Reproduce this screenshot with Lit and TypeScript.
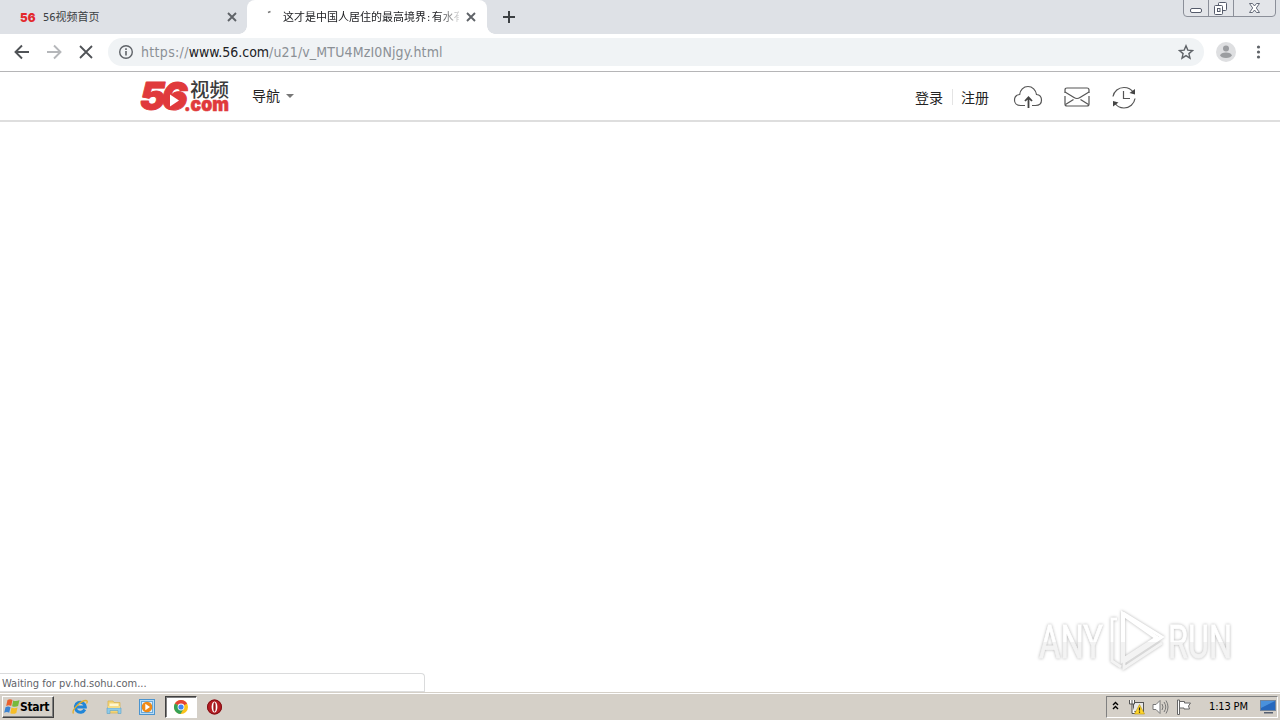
import {LitElement, html, svg, css} from 'lit';
import {customElement, property} from 'lit/decorators.js';

const cross = html`
  <svg class="cross" width="10" height="10" viewBox="0 0 10 10">
    <path d="M1 1l8 8M9 1L1 9" fill="none" stroke="#5f6368" stroke-width="1.9" />
  </svg>`;

/** Tab row with the window buttons on its right */
@customElement('browser-tabs')
export class BrowserTabs extends LitElement {
  static styles = css`
    :host {
      display: flex;
      height: 34px;
      background: #dee1e6;
      font: 11px/16px 'DejaVu Sans Condensed', 'Noto Sans CJK SC', sans-serif;
      color: #3c4043;
    }
    svg { display: block; flex: none; }
    .tab {
      display: flex;
      align-items: center;
      box-sizing: border-box;
      height: 34px;
    }
    .idle { width: 247px; padding: 0 10px 0 20px; }
    .active {
      position: relative;
      width: 240px;
      padding: 0 11px 0 18px;
      background: #fff;
      border-radius: 8px 8px 0 0;
    }
    .active::before, .active::after {
      content: '';
      position: absolute;
      bottom: 0;
      width: 8px;
      height: 8px;
    }
    .active::before { left: -8px; background: radial-gradient(circle at 0 0, transparent 7.5px, #fff 8px); }
    .active::after { right: -8px; background: radial-gradient(circle at 100% 0, transparent 7.5px, #fff 8px); }
    .title { flex: 1; padding-top: 2px; white-space: nowrap; overflow: hidden; }
    .idle .title { margin-left: 7px; }
    .active .title {
      flex: none;
      width: 176px;
      margin: 0 7px 0 9px;
      color: #202124;
      -webkit-mask-image: linear-gradient(90deg, #000 154px, transparent 180px);
    }
    .colon { margin: 0 1.500px 0 1px; }
    .plus { margin: 11px 0 0 16px; }
    .window { margin-left: auto; margin-right: 4px; }
  `;

  render() {
    return html`
      <div class="tab idle">
        <svg width="16" height="14" viewBox="0 0 16 14">
          <text x="0" y="11.500" font-family="Inter, sans-serif" font-weight="900" font-size="12"
            textLength="15.5" lengthAdjust="spacingAndGlyphs" fill="#e3282d">56</text>
        </svg>
        <span class="title">56视频首页</span>
        ${cross}
      </div>
      <div class="tab active">
        <svg width="9" height="16" viewBox="0 0 9 16">
          <path d="M3 3.500l2.500-1" stroke="#777" stroke-width="1.500" />
        </svg>
        <span class="title">这才是中国人居住的最高境界<span class="colon">:</span>有水有</span>
        ${cross}
      </div>
      <svg class="plus" width="12" height="12" viewBox="0 0 12 12">
        <path d="M6 0v12M0 6h12" stroke="#3c4043" stroke-width="2" />
      </svg>
      <svg class="window" width="93" height="17" viewBox="0 0 93 17">
        <path d="M.5 0v13q0 3.500 3.500 3.500h85q3.500 0 3.500-3.500V0M25.500 0v16M50.500 0v16"
          fill="#e3e5e9" stroke="#8b8f99" />
        <rect x="7.500" y="8.500" width="11" height="4" rx="1.500" fill="#fff" stroke="#555b6b" />
        <rect x="35.500" y="2.500" width="8" height="8" rx="1" fill="#fff" stroke="#555b6b" />
        <rect x="31.500" y="5.500" width="8" height="9" rx="1" fill="#fff" stroke="#555b6b" />
        <rect x="34.500" y="8.500" width="2.500" height="3" fill="none" stroke="#555b6b" />
        <path d="M66.500 3.500h3l2 2.500 2-2.500h3l-3.200 4.500 3.200 4.500h-3l-2-2.500-2 2.500h-3l3.200-4.500z"
          fill="#fff" stroke="#555b6b" stroke-width=".9" />
      </svg>`;
  }
}

/** Navigation buttons and address field */
@customElement('browser-toolbar')
export class BrowserToolbar extends LitElement {
  static styles = css`
    :host {
      display: flex;
      align-items: center;
      box-sizing: border-box;
      height: 38px;
      padding: 0 14px 1px;
      background: #fff;
      border-bottom: 1px solid #b5b5b7;
    }
    svg { display: block; flex: none; }
    .nav { display: flex; gap: 16px; }
    .address {
      display: flex;
      align-items: center;
      flex: 1;
      box-sizing: border-box;
      height: 28px;
      margin: 0 12px 0 14px;
      padding: 0 10px;
      border-radius: 14px;
      background: #f0f3f5;
    }
    .url {
      flex: 1;
      margin-left: 7px;
      font: 14px/18px 'DejaVu Sans Condensed', sans-serif;
      letter-spacing: .05px;
      color: #8b9095;
      white-space: nowrap;
    }
    .scheme { letter-spacing: .32px; }
    .host { letter-spacing: -.02px; color: #202124; }
    .path { letter-spacing: .14px; }
    .menu { margin-left: 14px; }
  `;

  render() {
    return html`
      <div class="nav">
        <svg width="16" height="16" viewBox="0 0 16 16">
          <path d="M15 8H2M8 1.500L1.500 8 8 14.500" fill="none" stroke="#505357" stroke-width="1.900" />
        </svg>
        <svg width="16" height="16" viewBox="0 0 16 16">
          <path d="M1 8h13M8 1.500L14.500 8 8 14.500" fill="none" stroke="#b5b7ba" stroke-width="1.900" />
        </svg>
        <svg width="16" height="16" viewBox="0 0 16 16">
          <path d="M2 2l12 12M14 2L2 14" fill="none" stroke="#505357" stroke-width="1.800" />
        </svg>
      </div>
      <div class="address">
        <svg width="16" height="16" viewBox="0 0 16 16">
          <circle cx="8" cy="8" r="6.300" fill="none" stroke="#5f6368" stroke-width="1.400" />
          <path d="M8 7v4.500M8 4.300v1.700" stroke="#5f6368" stroke-width="1.600" />
        </svg>
        <span class="url"><span class="scheme">https://</span><span class="host">www.56.com</span><span class="path">/u21/v_MTU4MzI0Njgy.html</span></span>
        <svg width="16" height="16" viewBox="0 0 16 16">
          <path d="M8 1.800l1.800 4.300 4.700.4-3.600 3.100 1.100 4.600L8 11.700l-4 2.500 1.100-4.600L1.500 6.500l4.700-.4z"
            fill="none" stroke="#5f6368" stroke-width="1.400" />
        </svg>
      </div>
      <svg width="20" height="20" viewBox="0 0 20 20">
        <circle cx="10" cy="10" r="10" fill="#dedfe1" />
        <circle cx="10" cy="6.500" r="3" fill="#9b9da0" />
        <ellipse cx="10" cy="13.200" rx="5.700" ry="2.800" fill="#9b9da0" />
      </svg>
      <svg class="menu" width="16" height="16" viewBox="0 0 16 16" fill="#5f6368">
        <circle cx="8.500" cy="3" r="1.600" /><circle cx="8.500" cy="8" r="1.600" /><circle cx="8.500" cy="13" r="1.600" />
      </svg>`;
  }
}

/** Top bar of the video site */
@customElement('site-header')
export class SiteHeader extends LitElement {
  static styles = css`
    :host {
      display: flex;
      align-items: center;
      box-sizing: border-box;
      height: 50px;
      padding: 0 144px 0 139px;
      background: #fff;
      border-bottom: 2px solid #dedede;
      font: 14px/20px 'Noto Sans CJK SC', sans-serif;
      color: #333;
    }
    svg { display: block; flex: none; }
    .logo { overflow: visible; }
    .nav { margin: 0 6px 2px 22px; color: #222; }
    .account { display: flex; align-items: center; margin: 2px 24px 0 auto; color: #222; }
    .divider { width: 1px; height: 16px; margin: 0 8px 0 9px; background: #e4e4e4; }
    .tools { display: flex; align-items: center; gap: 22px; padding-top: 2px; }
    .cloud { margin-right: -1px; }
  `;

  render() {
    return html`
      <svg class="logo" width="91" height="34" viewBox="0 0 91 34">
        <text x="0.500 22.500" y="31.300" font-family="Inter, sans-serif" font-weight="900" font-style="italic"
          font-size="39" fill="#e03a3c" stroke="#e03a3c" stroke-width=".9" stroke-linejoin="round">56</text>
        <circle cx="35" cy="21.500" r="6.500" fill="#e03a3c" />
        <path d="M31 15.500l9 6-9 6z" fill="#fff" />
        <text x="45" y="31.800" font-family="Inter, sans-serif" font-weight="900" font-size="19"
          textLength="45" lengthAdjust="spacingAndGlyphs" fill="#e03a3c" stroke="#e03a3c" stroke-width=".5">.com</text>
        <text x="51" y="18" font-family="Noto Sans CJK SC, sans-serif" font-weight="500" font-size="19.500"
          textLength="39" lengthAdjust="spacingAndGlyphs" fill="#3c3c3c">视频</text>
      </svg>
      <span class="nav">导航</span>
      <svg width="8" height="4" viewBox="0 0 8 4"><path d="M0 0h8L4 4z" fill="#777" /></svg>
      <div class="account">
        <span>登录</span><span class="divider"></span><span>注册</span>
      </div>
      <div class="tools">
        <svg class="cloud" width="30" height="24" viewBox="0 0 30 24">
          <path d="M12 20.500H7.500C3.500 20.500 1.500 18 1.500 15c0-3 2-5.200 5.200-5.500C7 5 10.500 1.500 15 1.500S22.800 5 23.500 9.500c3 .3 5 2.500 5 5.500s-2 5.500-6 5.500H19"
            fill="none" stroke="#555" stroke-width="1.200" />
          <path d="M15.500 23V13M12 16l3.500-3.700L19 16" fill="none" stroke="#444" stroke-width="1.800" />
        </svg>
        <svg width="26" height="20" viewBox="0 0 26 20" fill="none" stroke="#555" stroke-width="1.200">
          <path d="M1 6V3q0-2 2-2h20q2 0 2 2v3M1 9v8q0 2 2 2h20q2 0 2-2V9" />
          <path d="M1 5l9 5.500q3 2 6 0L25 5M1.500 17.500l8-5M24.500 17.500l-8-5" />
        </svg>
        <svg width="24" height="24" viewBox="0 0 24 24" fill="none" stroke="#555" stroke-width="1.200">
          <path d="M1 11.500C2 6 6.500 2.500 12 2.500c4 0 7.500 2 9.500 5M23 13.500c-.8 5.500-5.300 9.500-11 9.500-4 0-7.500-2-9.500-5.500M11.500 6v7.500H18" />
          <path d="M23 4v5.500l-5.500-1.500zM1 21.500V16l5.500 1.500z" fill="#444" stroke="none" />
        </svg>
      </div>`;
  }
}

// Quick launch icons, all on a 16px grid
const icons = {
  ie: svg`
    <path d="M12.800 10.500A5 5 0 1 1 13.300 8H4" fill="none" stroke="#2186d8" stroke-width="3" />
    <path d="M1.500 14.500C-1 11 9 1.500 14 1.500c1.500 0 1.500 1.500.5 3" fill="none" stroke="#e2ae2d" stroke-width="1.300" />`,
  folder: svg`
    <path d="M2 2h5l1 1.500h6V14H2z" fill="#f3d477" stroke="#d8b24b" stroke-width=".7" />
    <path d="M3.500 4.500h9V8h-9z" fill="#fff6cf" />
    <path d="M1 9h14v5.500h-3V11.500H4v3H1z" fill="#8fcbe9" stroke="#5ca3c9" stroke-width=".6" />
    <path d="M2 7h12v2H2z" fill="#f5dc86" />`,
  media: svg`
    <rect x=".5" y=".5" width="15" height="15" fill="#b9dcf5" stroke="#4b94cf" />
    <rect x="2.500" y="2.500" width="11" height="11" fill="#dceefb" stroke="#69a9da" />
    <circle cx="8" cy="8" r="5.300" fill="#f08a16" />
    <path d="M6.300 4.800L11 8l-4.700 3.200z" fill="#fff" />`,
  chrome: svg`
    <circle cx="8" cy="8" r="7" fill="#fbc31b" />
    <path d="M8 8L1.900 4.500A7 7 0 0 1 14.100 4.500z" fill="#e44436" />
    <path d="M8 8L1.900 4.500A7 7 0 0 0 7.500 15L10.500 10z" fill="#36a156" />
    <circle cx="8" cy="8" r="3.400" fill="#fff" /><circle cx="8" cy="8" r="2.600" fill="#4285f4" />`,
  opera: svg`
    <circle cx="8.500" cy="8" r="7.500" fill="#b51c22" />
    <circle cx="8.500" cy="8" r="7" fill="none" stroke="#7d1015" />
    <ellipse cx="8.500" cy="8" rx="2.900" ry="5.500" fill="#fff" />
    <ellipse cx="8.500" cy="8" rx="1.200" ry="4.700" fill="#9c1519" />`,
};

@customElement('task-button')
export class TaskButton extends LitElement {
  @property() icon: keyof typeof icons = 'ie';

  static styles = css`
    :host { display: flex; align-items: center; justify-content: center; width: 32px; height: 22px; box-sizing: border-box; }
    :host([pressed]) {
      background: #fff;
      border: 1px solid;
      border-color: #404040 #fff #fff #404040;
      box-shadow: inset 1px 1px #808080;
    }
    svg { display: block; }
  `;

  render() {
    return html`<svg width="16" height="16" viewBox="0 0 16 16">${icons[this.icon]}</svg>`;
  }
}

/** Classic style taskbar */
@customElement('task-bar')
export class TaskBar extends LitElement {
  static styles = css`
    :host {
      display: flex;
      align-items: center;
      box-sizing: border-box;
      height: 28px;
      padding: 1px 2px 0;
      background: #d5d0c8;
      border-top: 1px solid #d5d0c8;
      box-shadow: inset 0 1px #fff;
      font: 11px/14px 'DejaVu Sans Condensed', sans-serif;
      color: #000;
    }
    svg { display: block; flex: none; }
    .start {
      display: flex;
      align-items: center;
      box-sizing: border-box;
      width: 52px;
      height: 22px;
      padding-left: 1px;
      border: 1px solid;
      border-color: #fff #404040 #404040 #fff;
      box-shadow: inset -1px -1px #808080;
      font-weight: 700;
      font-size: 12px;
      letter-spacing: -.35px;
    }
    .quick { display: flex; gap: 1.600px; margin-left: 10px; }
    .tray {
      display: flex;
      align-items: center;
      box-sizing: border-box;
      width: 172px;
      height: 22px;
      margin-left: auto;
      padding-left: 5px;
      border: 1px solid;
      border-color: #808080 #fff #fff #808080;
    }
    .chevrons { margin-bottom: 2px; }
    .network { margin-left: 9px; }
    .sound { margin-left: 7px; }
    .flag { margin-left: 7px; }
    .clock { margin: 0 10px 0 17px; width: 41px; letter-spacing: -.15px; white-space: nowrap; }
  `;

  render() {
    return html`
      <div class="start">
        <svg width="16" height="16" viewBox="0 0 16 16">
          <path d="M3.500 1q2.500-1.500 5 0L7.200 7q-2.500-1.300-5 .1z" fill="#e9602c" />
          <path d="M9.200 1.500q2.800 1.400 6.300-.4l-1.400 6q-2.800 1.400-6 .2z" fill="#77b93d" />
          <path d="M1.500 8.300q2.500-1.400 5-.1l-1.300 5.500q-2.300-1.500-5 0z" fill="#3a83d2" />
          <path d="M7.500 8.600q2.800 1.300 6-.1L12.300 14q-3 1.600-6 .2z" fill="#f6bd27" />
        </svg>
        <span>Start</span>
      </div>
      <div class="quick">
        <task-button icon="ie"></task-button>
        <task-button icon="folder"></task-button>
        <task-button icon="media"></task-button>
        <task-button icon="chrome" pressed></task-button>
        <task-button icon="opera"></task-button>
      </div>
      <div class="tray">
        <svg class="chevrons" width="7" height="10" viewBox="0 0 7 10">
          <path d="M1 4l2.500-2.500L6 4M1 8l2.500-2.500L6 8" fill="none" stroke="#000" stroke-width="1.400" />
        </svg>
        <svg class="network" width="17" height="16" viewBox="0 0 17 16">
          <rect x="5.500" y="3.500" width="10" height="9" fill="#e8e8e8" stroke="#555" />
          <path d="M1.500 1v4h5V1M4 1v4M4 5v9.500h3" fill="#fff" stroke="#555" />
          <path d="M11.500 5.500l5 9.500h-10z" fill="#ffd52b" stroke="#b79312" stroke-width=".6" />
          <path d="M11.500 8.500v3M11.500 12.500v1.300" stroke="#222" stroke-width="1.200" />
        </svg>
        <svg class="sound" width="17" height="16" viewBox="0 0 17 16" fill="none" stroke="#777">
          <path d="M1 5.500h3l4-4v13l-4-4H1z" fill="#fff" />
          <path d="M10 5q2 3 0 6M12 3q3.500 5 0 10M14 1.500q4 6.500 0 13" />
        </svg>
        <svg class="flag" width="16" height="16" viewBox="0 0 16 16" fill="#fff" stroke="#666">
          <path d="M1.500 1v14.500h2V1zM3.500 2.500h5v1.500h6l-2 3 1 3H8V9H3.500z" />
        </svg>
        <span class="clock">1:13 PM</span>
        <svg width="16" height="14" viewBox="0 0 16 14">
          <rect x=".5" y=".5" width="15" height="10" fill="#2768bd" stroke="#73859c" />
          <path d="M1 1h14L1 8z" fill="#4a91dc" />
          <path d="M4 12h9v1.500H4z" fill="#555f70" />
        </svg>
      </div>`;
  }
}

@customElement('app-root')
export class AppRoot extends LitElement {
  static styles = css`
    :host {
      position: relative;
      display: flex;
      flex-direction: column;
      width: 1280px;
      height: 720px;
      overflow: hidden;
      background: #fff;
    }
    .page { flex: 1; }
    .status {
      position: absolute;
      left: 0;
      bottom: 28px;
      box-sizing: border-box;
      width: 425px;
      height: 19px;
      padding-left: 2px;
      background: #fff;
      border: 1px solid #dadbdc;
      border-left: 0;
      border-bottom-color: #ddd;
      border-top-right-radius: 4px;
      font: 11px/19px 'DejaVu Sans Condensed', sans-serif;
      color: #5f6368;
    }
    .watermark {
      position: absolute;
      left: 1030px;
      top: 602px;
      overflow: visible;
      filter: drop-shadow(0 0 1.500px rgba(0, 0, 0, .3));
    }
  `;

  render() {
    return html`
      <browser-tabs></browser-tabs>
      <browser-toolbar></browser-toolbar>
      <site-header></site-header>
      <div class="page"></div>
      <task-bar></task-bar>
      <div class="status">Waiting for pv.hd.sohu.com...</div>
      <svg class="watermark" width="210" height="76" viewBox="0 0 210 76">
        <defs>
          <linearGradient id="fade" x1="0" y1="0" x2="0" y2="76" gradientUnits="userSpaceOnUse">
            <stop offset=".52" stop-color="#fff" /><stop offset=".53" stop-color="#f3f3f3" />
          </linearGradient>
        </defs>
        <g fill="url(#fade)" stroke="url(#fade)" stroke-width=".8" font-family="Roboto, sans-serif" font-size="47">
          <text x="9" y="56" textLength="64" lengthAdjust="spacingAndGlyphs">ANY</text>
          <text x="138" y="56" textLength="64" lengthAdjust="spacingAndGlyphs">RUN</text>
        </g>
        <g fill="none" stroke="url(#fade)" stroke-width="4">
          <path d="M93 12v46l34-22z" />
          <path d="M93 11l39 24-38 25v6l38-25M87 17h-5v42l9 6" stroke-width="3" />
        </g>
      </svg>`;
  }
}
